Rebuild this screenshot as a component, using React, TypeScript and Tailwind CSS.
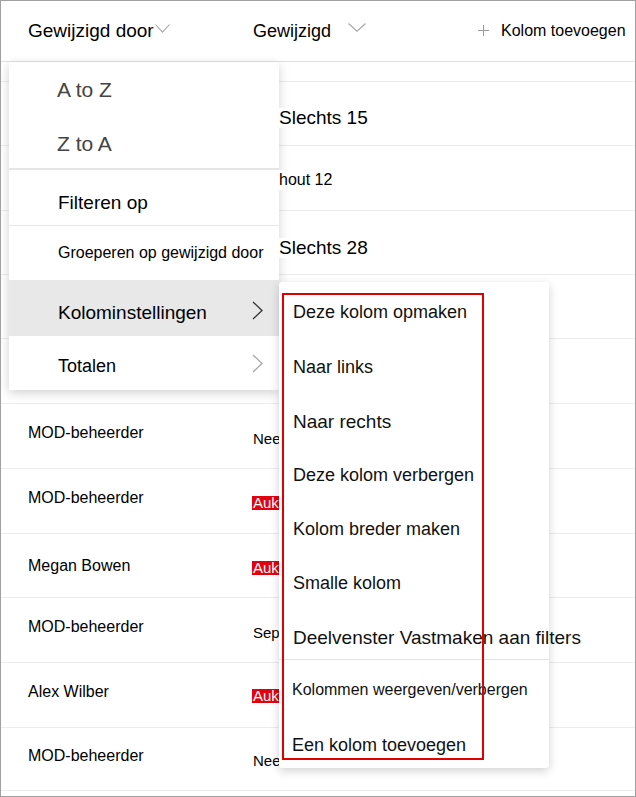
import React from 'react';

type Row = {
  h: string;
  left?: string;
  leftPad?: string;
  right?: React.ReactNode;
  rightPad?: string;
};

const ChevronDown: React.FC<{ w: number; h: number; className?: string }> = ({ w, h, className }) => (
  <svg width={w} height={h} viewBox={`0 0 ${w} ${h}`} className={className} fill="none">
    <path d={`M0.5 0.5 L${w / 2} ${h - 0.8} L${w - 0.5} 0.5`} stroke="#a6a6a6" strokeWidth="1.1" />
  </svg>
);

const ChevronRight: React.FC<{ color: string }> = ({ color }) => (
  <svg width="11" height="19" viewBox="0 0 11 19" fill="none" className="shrink-0">
    <path d="M1 1 L10 9.5 L1 18" stroke={color} strokeWidth="1.3" />
  </svg>
);

const Auk = () => (
  <span className="ml-[-1px] block h-[14px] bg-[#e3000f] pl-[1px] text-[15px] leading-[14px] text-white">
    Auk
  </span>
);

const rows: Row[] = [
  { h: 'h-[20px]' },
  { h: 'h-[64px]', right: <span className="relative z-30 ml-[26px] bg-white text-[19px] leading-[20px]">Slechts 15</span>, rightPad: 'pt-[26px]' },
  { h: 'h-[65px]', right: <span className="relative z-30 ml-[26px] bg-white text-[16px] leading-[20px]">hout 12</span>, rightPad: 'pt-[24px]' },
  { h: 'h-[64px]', right: <span className="relative z-30 ml-[26px] bg-white text-[19px] leading-[20px]">Slechts 28</span>, rightPad: 'pt-[27px]' },
  { h: 'h-[64px]' },
  { h: 'h-[65px]' },
  { h: 'h-[65px]', left: 'MOD-beheerder', leftPad: 'pt-[19px]', right: <span className="text-[15px] leading-[20px]">Nee</span>, rightPad: 'pt-[25px]' },
  { h: 'h-[65px]', left: 'MOD-beheerder', leftPad: 'pt-[19px]', right: <Auk />, rightPad: 'pt-[27px]' },
  { h: 'h-[64px]', left: 'Megan Bowen', leftPad: 'pt-[22px]', right: <Auk />, rightPad: 'pt-[27px]' },
  { h: 'h-[65px]', left: 'MOD-beheerder', leftPad: 'pt-[19px]', right: <span className="text-[15px] leading-[20px]">Sep</span>, rightPad: 'pt-[25px]' },
  { h: 'h-[65px]', left: 'Alex Wilber', leftPad: 'pt-[19px]', right: <Auk />, rightPad: 'pt-[26px]' },
  { h: 'h-[63px]', left: 'MOD-beheerder', leftPad: 'pt-[18px]', right: <span className="text-[15px] leading-[20px]">Nee</span>, rightPad: 'pt-[23px]' },
];

const subItems = [
  { label: 'Deze kolom opmaken', cls: 'h-[55px] pt-[18px] pl-[14px] text-[18px]' },
  { label: 'Naar links', cls: 'h-[55px] pt-[18px] pl-[14px] text-[18px]' },
  { label: 'Naar rechts', cls: 'h-[54px] pt-[18px] pl-[14px] text-[19px]' },
  { label: 'Deze kolom verbergen', cls: 'h-[54px] pt-[17px] pl-[14px] text-[18px]' },
  { label: 'Kolom breder maken', cls: 'h-[54px] pt-[17px] pl-[14px] text-[18px]' },
  { label: 'Smalle kolom', cls: 'h-[54px] pt-[17px] pl-[14px] text-[18px]' },
  { label: 'Deelvenster Vastmaken aan filters', cls: 'h-[52px] pt-[18px] pl-[14px] text-[19px] border-b border-[#e3e3e3]' },
  { label: 'Kolommen weergeven/verbergen', cls: 'h-[55px] pt-[20px] pl-[13px] text-[16px] !leading-[20px]' },
  { label: 'Een kolom toevoegen', cls: 'h-[53px] pt-[18px] pl-[13px] text-[18px]' },
];

export default function App() {
  return (
    <div className="relative h-[797px] w-[636px] overflow-hidden border border-[#a0a0a0] bg-white font-['Liberation_Sans',Arial,sans-serif] text-black">
      {/* header */}
      <div className="flex h-[61px] items-center border-b border-[#e1e1e1]">
        <div className="flex w-[252px] items-center pl-[27px]">
          <span className="text-[19px]">Gewijzigd door</span>
          <ChevronDown w={15} h={9} className="mb-[6px] ml-[1px]" />
        </div>
        <div className="flex w-[225px] items-center">
          <span className="text-[18px]">Gewijzigd</span>
          <ChevronDown w={18} h={9} className="mb-[7px] ml-[17px]" />
        </div>
        <div className="flex items-center gap-[12px]">
          <svg width="11" height="11" viewBox="0 0 11 11" className="mb-[1px]">
            <path d="M5.5 0 V11 M0 5.5 H11" stroke="#9a9a9a" strokeWidth="1" />
          </svg>
          <span className="text-[16px]">Kolom toevoegen</span>
        </div>
      </div>

      {/* list rows */}
      {rows.map((row, i) => (
        <div key={i} className={`flex border-b border-[#ececec] ${row.h}`}>
          <div className={`flex w-[252px] items-start pl-[27px] text-[16px] leading-[20px] ${row.leftPad ?? ''}`}>{row.left}</div>
          <div className={`flex flex-1 items-start ${row.rightPad ?? ''}`}>{row.right}</div>
        </div>
      ))}

      {/* column menu */}
      <div className="absolute left-[8px] top-[61px] z-10 w-[270px] bg-white shadow-[0_3px_10px_rgba(0,0,0,0.18)]">
        <div className="h-[53px] pl-[48px] pt-[16px] text-[21px] leading-[24px] text-[#444]">A to Z</div>
        <div className="h-[53px] pl-[48px] pt-[17px] text-[21px] leading-[24px] text-[#444]">Z to A</div>
        <div className="h-[2px] bg-[#e6e6e6]" />
        <div className="h-[56px] border-b border-[#e6e6e6] pl-[49px] pt-[21px] text-[19px] leading-[24px]">Filteren op</div>
        <div className="h-[54px] pl-[49px] pt-[17px] text-[16px] leading-[20px]">Groeperen op gewijzigd door</div>
        <div className="flex h-[56px] items-start bg-[#e8e8e8] pl-[49px] pr-[16px] pt-[21px]">
          <span className="flex-1 text-[19px] leading-[24px]">Kolominstellingen</span>
          <ChevronRight color="#333" />
        </div>
        <div className="flex h-[54px] items-start pl-[49px] pr-[16px] pt-[18px]">
          <span className="flex-1 text-[18px] leading-[24px]">Totalen</span>
          <ChevronRight color="#a8a8a8" />
        </div>
      </div>

      {/* submenu */}
      <div className="absolute left-[278px] top-[281px] z-20 w-[270px] rounded-[3px] bg-white shadow-[0_3px_10px_rgba(0,0,0,0.18)]">
        {subItems.map((item) => (
          <div key={item.label} className={`whitespace-nowrap leading-[24px] text-[#111] ${item.cls}`}>
            {item.label}
          </div>
        ))}
        <div className="pointer-events-none absolute left-[3px] top-[11px] h-[467px] w-[202px] border-2 border-[#e00000]" />
      </div>
    </div>
  );
}
